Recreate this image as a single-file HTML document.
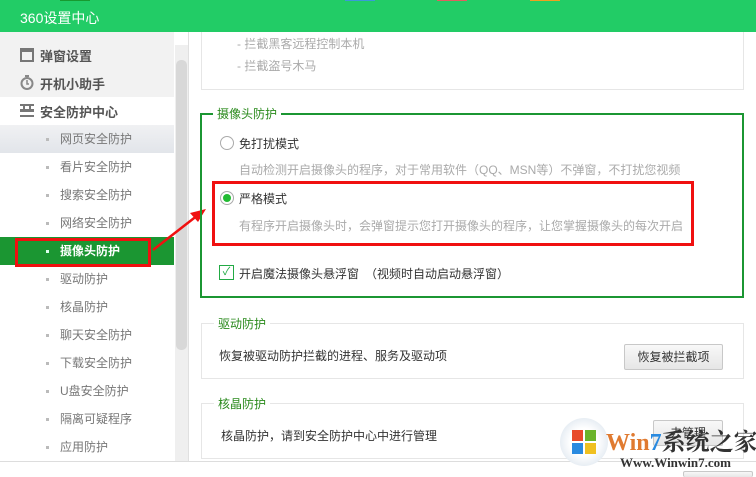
<!DOCTYPE html>
<html><head><meta charset="utf-8"><style>
*{margin:0;padding:0;box-sizing:border-box}
body{width:756px;height:477px;overflow:hidden;background:#fff;position:relative;font-family:"Liberation Sans","Noto Sans CJK SC",sans-serif;font-size:12px;color:#333}
.a{position:absolute;white-space:nowrap}
.hdr{left:0;top:0;width:756px;height:32px;background:#22cc66}
.side{left:0;top:32px;width:174px;height:430px;background:#fff}
.item{left:60px;color:#777;font-size:12px}
.dot{left:46px;width:3px;height:3px;background:#bbb}
.box{border:1px solid #e6e6e6}
.gt{color:#2a8a1c;background:#fff;padding:0 4px;font-size:12px}
.desc{color:#aaa;font-size:12px}
.btn{border:1px solid #c8c8c8;border-radius:2px;background:linear-gradient(#f8f8f8,#e6e6e6);text-align:center;font-size:12px;color:#333}
</style></head><body>
<div class="a hdr"></div>
<div class="a" style="left:60px;top:0;width:30px;height:1px;background:#189a30"></div>
<div class="a" style="left:345px;top:0;width:30px;height:1px;background:#3a9ad8"></div>
<div class="a" style="left:437px;top:0;width:30px;height:1px;background:#e06060"></div>
<div class="a" style="left:530px;top:0;width:30px;height:1px;background:#f0a020"></div>
<div class="a" style="left:20px;top:8px;color:#fff;font-size:14px">360设置中心</div>

<div class="a side"></div>
<div class="a" style="left:0;top:32px;width:174px;height:65px;background:#f2f2f2"></div>
<svg class="a" style="left:20px;top:48px" width="14" height="14"><rect x="1" y="1" width="12" height="12" fill="none" stroke="#777" stroke-width="2"/><rect x="1" y="1" width="12" height="3" fill="#777"/></svg>
<div class="a" style="left:40px;top:46px;font-size:13px;font-weight:bold;color:#555">弹窗设置</div>
<svg class="a" style="left:20px;top:75px" width="14" height="15"><circle cx="7" cy="8.5" r="5.5" fill="none" stroke="#888" stroke-width="2"/><rect x="5" y="0" width="4" height="2" fill="#888"/><path d="M7 5v4h2" stroke="#888" stroke-width="1.5" fill="none"/></svg>
<div class="a" style="left:40px;top:74px;font-size:13px;font-weight:bold;color:#555">开机小助手</div>
<svg class="a" style="left:20px;top:104px" width="14" height="13"><rect x="0" y="0" width="14" height="2" fill="#777"/><rect x="0" y="5" width="14" height="3" fill="#777"/><rect x="0" y="11" width="14" height="2" fill="#777"/><rect x="3" y="2" width="2" height="3" fill="#777"/><rect x="9" y="2" width="2" height="3" fill="#777"/></svg>
<div class="a" style="left:40px;top:102px;font-size:13px;font-weight:bold;color:#555">安全防护中心</div>
<div class="a" style="left:0;top:125px;width:174px;height:28px;background:linear-gradient(#f0f1f3,#e2e5ea)"></div>

<div class="a dot" style="top:138px"></div><div class="a item" style="top:130px">网页安全防护</div>
<div class="a dot" style="top:166px"></div><div class="a item" style="top:158px">看片安全防护</div>
<div class="a dot" style="top:194px"></div><div class="a item" style="top:186px">搜索安全防护</div>
<div class="a dot" style="top:222px"></div><div class="a item" style="top:214px">网络安全防护</div>
<div class="a" style="left:0;top:237px;width:174px;height:28px;background:#1b9632"></div>
<div class="a" style="left:15px;top:238px;width:136px;height:29px;border:3px solid #f01010"></div>
<div class="a dot" style="top:250px;background:#dfe"></div><div class="a item" style="top:242px;color:#fff;font-weight:bold">摄像头防护</div>
<div class="a dot" style="top:278px"></div><div class="a item" style="top:270px">驱动防护</div>
<div class="a dot" style="top:306px"></div><div class="a item" style="top:298px">核晶防护</div>
<div class="a dot" style="top:334px"></div><div class="a item" style="top:326px">聊天安全防护</div>
<div class="a dot" style="top:362px"></div><div class="a item" style="top:354px">下载安全防护</div>
<div class="a dot" style="top:390px"></div><div class="a item" style="top:382px">U盘安全防护</div>
<div class="a dot" style="top:418px"></div><div class="a item" style="top:410px">隔离可疑程序</div>
<div class="a dot" style="top:446px"></div><div class="a item" style="top:438px">应用防护</div>

<div class="a" style="left:175px;top:45px;width:13px;height:417px;background:#efefef"></div>
<div class="a" style="left:176px;top:60px;width:11px;height:290px;background:#d8d8d8;border-radius:5px"></div>
<div class="a" style="left:188px;top:32px;width:1px;height:430px;background:#e0e0e0"></div>

<svg class="a" style="left:150px;top:205px" width="60" height="50"><line x1="3" y1="45" x2="48" y2="10" stroke="#f01010" stroke-width="2.5"/><polygon points="56,4 40,8 48,17" fill="#f01010"/></svg>

<div class="a box" style="left:201px;top:32px;width:543px;height:58px;border-top:none"></div>
<div class="a desc" style="left:237px;top:35px">- 拦截黑客远程控制本机</div>
<div class="a desc" style="left:237px;top:57px">- 拦截盗号木马</div>

<div class="a" style="left:200px;top:113px;width:544px;height:185px;border:2px solid #1b9632"></div>
<div class="a gt" style="left:213px;top:105px">摄像头防护</div>
<div class="a" style="left:220px;top:136px;width:14px;height:14px;border:1px solid #aaa;border-radius:50%;background:#fff"></div>
<div class="a" style="left:239px;top:135px">免打扰模式</div>
<div class="a desc" style="left:239px;top:161px">自动检测开启摄像头的程序，对于常用软件（QQ、MSN等）不弹窗，不打扰您视频</div>
<div class="a" style="left:212px;top:181px;width:482px;height:65px;border:3px solid #f01010"></div>
<div class="a" style="left:220px;top:191px;width:14px;height:14px;border:1px solid #aaa;border-radius:50%;background:#fff"><div style="margin:2px;width:8px;height:8px;border-radius:50%;background:#22bb33"></div></div>
<div class="a" style="left:239px;top:190px">严格模式</div>
<div class="a desc" style="left:239px;top:217px">有程序开启摄像头时，会弹窗提示您打开摄像头的程序，让您掌握摄像头的每次开启</div>
<div class="a" style="left:219px;top:265px;width:15px;height:15px;border:1px solid #22aa44;background:#fff;color:#22aa44;font-size:11px;line-height:13px;text-align:center">✓</div>
<div class="a" style="left:239px;top:265px">开启魔法摄像头悬浮窗　（视频时自动启动悬浮窗）</div>

<div class="a box" style="left:201px;top:323px;width:543px;height:56px"></div>
<div class="a gt" style="left:214px;top:315px">驱动防护</div>
<div class="a" style="left:219px;top:347px">恢复被驱动防护拦截的进程、服务及驱动项</div>
<div class="a btn" style="left:624px;top:344px;width:99px;height:26px;line-height:24px">恢复被拦截项</div>

<div class="a box" style="left:201px;top:403px;width:543px;height:56px"></div>
<div class="a gt" style="left:214px;top:395px">核晶防护</div>
<div class="a" style="left:221px;top:427px">核晶防护，请到安全防护中心中进行管理</div>
<div class="a btn" style="left:653px;top:420px;width:70px;height:26px;line-height:24px">去管理</div>

<div class="a" style="left:0;top:461px;width:756px;height:16px;background:#fff;border-top:1px solid #ddd"></div>
<div class="a btn" style="left:683px;top:471px;width:70px;height:6px;border-bottom:none"></div>

<div class="a" style="left:560px;top:418px;width:48px;height:48px;border-radius:50%;background:radial-gradient(circle,#fff 40%,#e8eef4 70%,#cfd8e0)"></div>
<div class="a" style="left:572px;top:430px;width:11px;height:11px;background:#e84a2a"></div>
<div class="a" style="left:585px;top:430px;width:11px;height:11px;background:#6ab42a"></div>
<div class="a" style="left:572px;top:443px;width:11px;height:11px;background:#2a8ae0"></div>
<div class="a" style="left:585px;top:443px;width:11px;height:11px;background:#f0c020"></div>
<div class="a" style="left:606px;top:422px;font-size:24px;font-weight:bold;color:#e07a30;font-family:'Liberation Serif','Noto Serif CJK SC',serif">Win<span style="color:#2a8ae0">7</span><span style="color:#333">系统之家</span></div>
<div class="a" style="left:620px;top:455px;font-size:13px;font-weight:bold;color:#333;font-family:'Liberation Serif',serif">Www.Winwin7.com</div>
</body></html>
